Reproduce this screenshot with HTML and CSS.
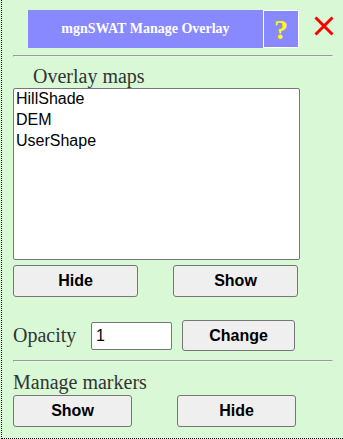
FILE: index.html
```html
<!DOCTYPE html>
<html lang="en">
<head>
    <meta charset="UTF-8">
    <meta name="viewport" content="width=device-width, initial-scale=1.0">
    <title>mgnSWAT Manage Overlay</title>
    <link rel="stylesheet" href="styles.css">
</head>
<body>

<div class="panel">
    <div class="header">
        <div class="title">mgnSWAT Manage Overlay</div>
        <div class="help">?</div>
        <div class="close">
            <svg width="20" height="20" viewBox="0 0 20 20">
                <path d="M1.5 1.5 L18.5 18.5 M18.5 1.5 L1.5 18.5" stroke="#ff0000" stroke-width="3" fill="none"/>
            </svg>
        </div>
    </div>

    <hr>

    <div class="section-label indent">Overlay maps</div>
    <select id="overlayList" class="overlay-list" size="8">
        <option value="hillshade">HillShade</option>
        <option value="dem">DEM</option>
        <option value="usershape">UserShape</option>
    </select>

    <div class="btn-row">
        <button class="btn btn-wide">Hide</button>
        <button class="btn btn-wide">Show</button>
    </div>

    <div class="opacity-row">
        <label for="opacity" class="section-label">Opacity</label>
        <input type="text" id="opacity" class="opacity-input" value="1">
        <button class="btn btn-change">Change</button>
    </div>

    <hr class="second">

    <div class="section-label markers">Manage markers</div>
    <div class="btn-row markers-row">
        <button class="btn btn-marker">Show</button>
        <button class="btn btn-marker">Hide</button>
    </div>
</div>

</body>
</html>
```

FILE: styles.css
```css
body {
    margin: 0;
    background-color: #d9f9d6;
    overflow: hidden;
}

.panel {
    margin-left: 1px;
    height: 439px;
    box-sizing: border-box;
    border-left: 1px dotted #000;
    border-bottom: 1px dotted #000;
    padding: 10px 0 0 11px;
}

.header {
    display: flex;
    align-items: flex-start;
    margin-left: 15px;
}

.title {
    width: 235px;
    height: 38px;
    background-color: #8888ff;
    color: #fff;
    font: bold 14px "Liberation Serif", serif;
    display: flex;
    align-items: center;
    justify-content: center;
}

.help {
    width: 34px;
    height: 36px;
    border: 1px solid #fff;
    background-color: #8888ff;
    color: #ffff00;
    font: bold 28px/37px "Liberation Serif", serif;
    text-align: center;
}

.close {
    margin: 6px 0 0 15px;
    width: 20px;
    height: 20px;
}

hr {
    width: 318px;
    margin: 7px 0 0 0;
    height: 0;
    border-style: solid;
    border-width: 1px;
    border-color: #9c9c9c #e6f7e4 #e6f7e4 #9c9c9c;
}

.section-label {
    font: 20px/23px "Liberation Serif", serif;
    color: #333;
}

.indent {
    margin: 8px 0 0 20px;
}

.overlay-list {
    display: block;
    width: 287px;
    height: 172px;
    box-sizing: border-box;
    border: 1px solid #767676;
    border-radius: 2px;
    background: #fff;
    padding: 0;
    margin: 0;
    font: 16px "Liberation Sans", Arial, sans-serif;
    color: #000;
    outline: none;
    overflow: hidden;
}

.overlay-list option {
    padding: 1px 2px 1px;
}

.btn-row {
    display: flex;
    margin-top: 5px;
    gap: 35px;
}

.btn {
    height: 32px;
    background-color: #efefef;
    border: 1px solid #767676;
    border-radius: 3px;
    font: bold 16px "Liberation Sans", Arial, sans-serif;
    color: #000;
    padding: 0;
    margin: 0;
}

.btn-wide {
    width: 125px;
}

.opacity-row {
    display: flex;
    align-items: center;
    margin-top: 23px;
}

.opacity-row .section-label {
    width: 78px;
}

.opacity-input {
    width: 81px;
    height: 28px;
    box-sizing: border-box;
    border: 1px solid #767676;
    border-radius: 2px;
    padding: 0 4px;
    margin: 0;
    font: 16px "Liberation Sans", Arial, sans-serif;
    color: #000;
    background: #fff;
}

.btn-change {
    width: 113px;
    height: 31px;
    margin-left: 10px;
}

.second {
    margin-top: 9px;
}

.markers {
    margin-top: 9px;
}

.markers-row {
    margin-top: 1px;
    gap: 45px;
}

.btn-marker {
    width: 119px;
}
```
